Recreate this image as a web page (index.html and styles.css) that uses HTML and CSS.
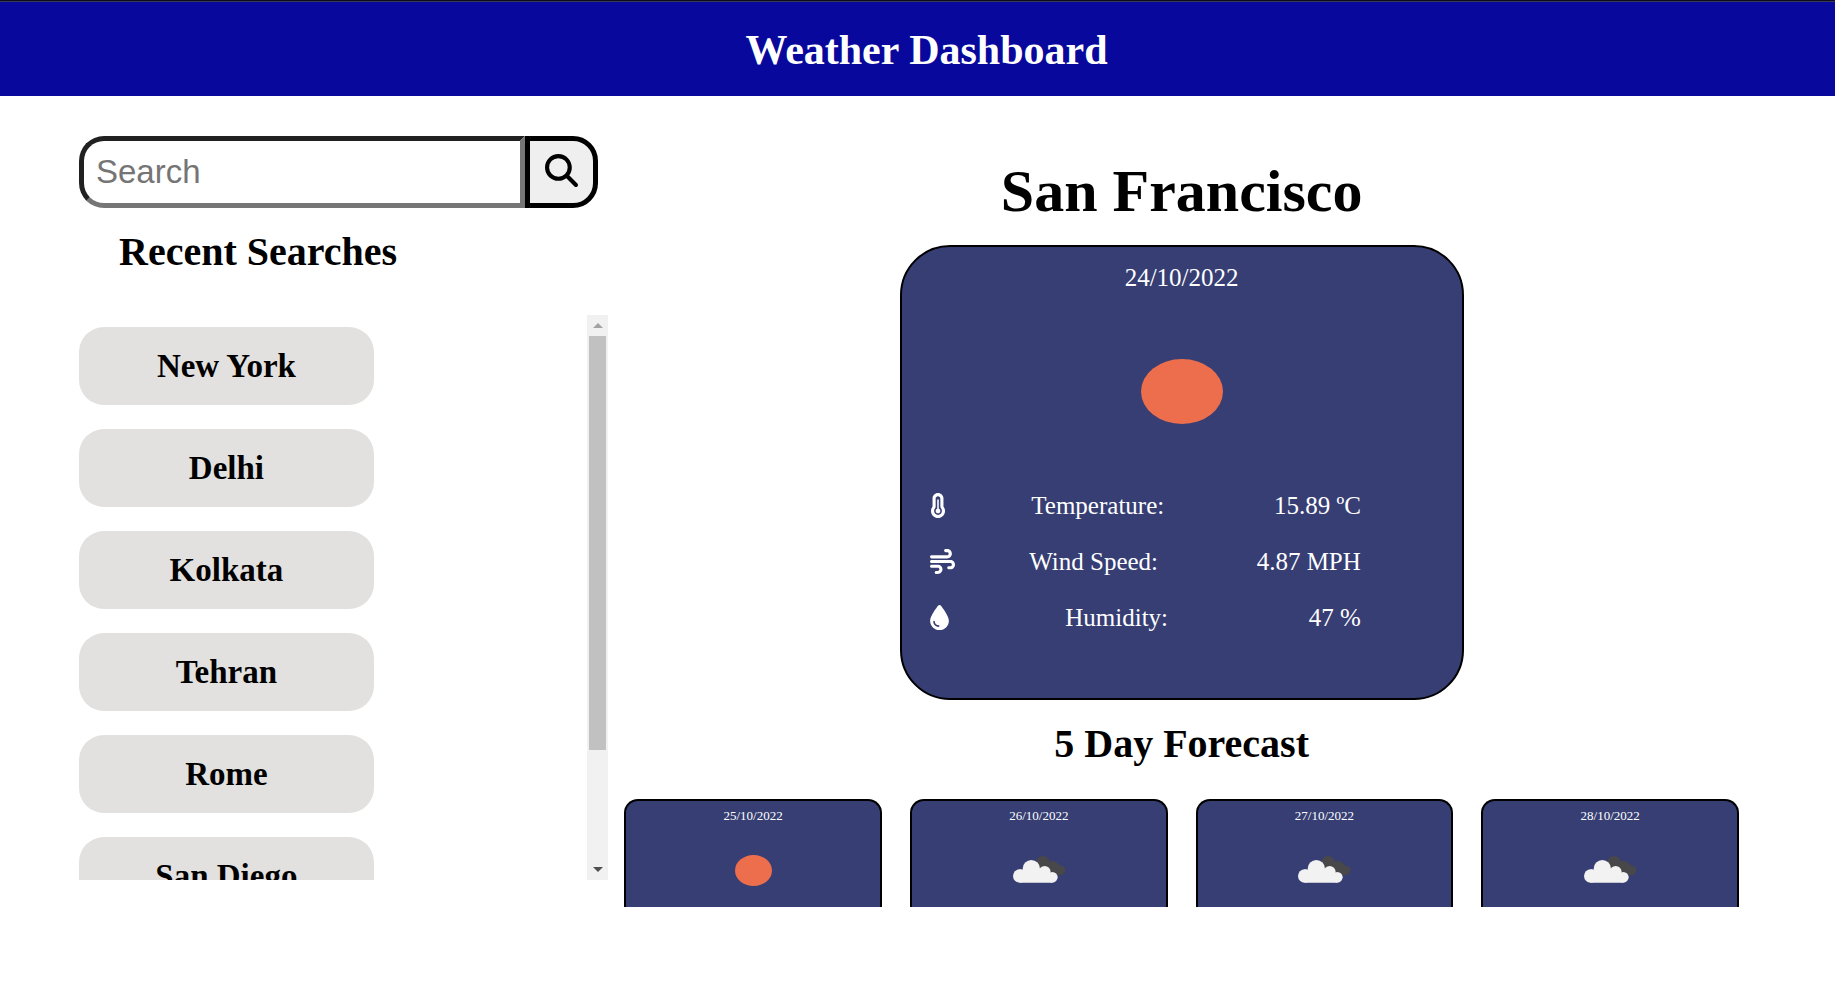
FILE: index.html
```html
<!DOCTYPE html>
<html lang="en">
<head>
<meta charset="utf-8">
<title>Weather Dashboard</title>
<meta name="viewport" content="width=device-width, initial-scale=1">
<link rel="stylesheet" href="styles.css">
</head>
<body>
<svg class="sprite" aria-hidden="true">
  <symbol id="sun" viewBox="0 0 82 65" preserveAspectRatio="none">
    <ellipse cx="41" cy="32.5" rx="41" ry="32.5" fill="#ec6e4c"/>
  </symbol>
  <symbol id="clouds" viewBox="26 33 180 120">
    <g fill="#48484a">
      <circle cx="128" cy="72" r="21"/>
      <circle cx="159" cy="83" r="17"/>
      <circle cx="181" cy="94" r="14"/>
      <path d="M118 70L160 67L187 84V106L176 109L150 104Z"/>
    </g>
    <g fill="#f2f2f2">
      <circle cx="58" cy="111" r="20"/>
      <circle cx="93" cy="89" r="26"/>
      <circle cx="133" cy="99" r="18"/>
      <circle cx="156" cy="115" r="16"/>
      <path d="M58 91L80 94L120 90L148 101L156 131H58Z"/>
    </g>
  </symbol>
</svg>

<header class="header">
  <h1 class="header-title">Weather Dashboard</h1>
</header>

<main class="layout">
  <aside class="sidebar">
    <form class="search" role="search">
      <input class="search-input" type="text" placeholder="Search" aria-label="Search">
      <button class="search-button" type="button" aria-label="Search city">
        <svg class="search-icon" viewBox="0 0 512 512"><path d="M416 208c0 45.9-14.900 88.300-40 122.700L502.600 457.400c12.500 12.500 12.500 32.800 0 45.300s-32.800 12.500-45.300 0L330.700 376c-34.400 25.200-76.800 40-122.700 40C93.100 416 0 322.900 0 208S93.100 0 208 0S416 93.100 416 208zM208 352a144 144 0 1 0 0-288 144 144 0 1 0 0 288z"/></svg>
      </button>
    </form>
    <h2 class="section-title recent-title">Recent Searches</h2>
    <div class="recent">
      <div class="recent-list">
        <button class="city" type="button">New York</button>
        <button class="city" type="button">Delhi</button>
        <button class="city" type="button">Kolkata</button>
        <button class="city" type="button">Tehran</button>
        <button class="city" type="button">Rome</button>
        <button class="city" type="button">San Diego</button>
      </div>
      <div class="scrollbar" aria-hidden="true">
        <span class="scroll-arrow scroll-up"></span>
        <span class="scroll-thumb"></span>
        <span class="scroll-arrow scroll-down"></span>
      </div>
    </div>
  </aside>

  <section class="weather">
    <h2 class="city-name">San Francisco</h2>
    <article class="today">
      <p class="today-date">24/10/2022</p>
      <svg class="today-icon"><use href="#sun"/></svg>
      <div class="metrics">
        <div class="metric">
          <svg class="metric-icon narrow" viewBox="0 0 320 512"><path d="M160 64c-26.500 0-48 21.500-48 48V276.500c0 17.300-7.100 31.900-15.300 42.500C86.200 332.600 80 349.500 80 368c0 44.200 35.800 80 80 80s80-35.800 80-80c0-18.500-6.200-35.400-16.700-48.900c-8.200-10.600-15.300-25.200-15.300-42.500V112c0-26.500-21.500-48-48-48zM48 112C48 50.200 98.100 0 160 0s112 50.100 112 112V276.500c0 .1 .1 .3 .2 .6c.2 .6 .8 1.600 1.700 2.800c18.900 24.400 30.100 55 30.100 88.100c0 79.500-64.500 144-144 144S16 447.500 16 368c0-33.200 11.200-63.800 30.100-88.100c.9-1.200 1.500-2.200 1.700-2.800c.1-.3 .2-.5 .2-.6V112zM208 368c0 26.500-21.500 48-48 48s-48-21.500-48-48c0-20.900 13.400-38.700 32-45.300V144c0-8.800 7.200-16 16-16s16 7.200 16 16V322.700c18.600 6.600 32 24.400 32 45.300z"/></svg>
          <span class="metric-label">Temperature:</span>
          <span>15.89 ºC</span>
        </div>
        <div class="metric">
          <svg class="metric-icon" viewBox="0 0 512 512"><path d="M288 32c0 17.700 14.300 32 32 32h32c17.700 0 32 14.300 32 32s-14.300 32-32 32H32c-17.700 0-32 14.300-32 32s14.300 32 32 32H352c53 0 96-43 96-96s-43-96-96-96H320c-17.700 0-32 14.300-32 32zm64 352c0 17.700 14.300 32 32 32h32c53 0 96-43 96-96s-43-96-96-96H32c-17.700 0-32 14.300-32 32s14.300 32 32 32H416c17.700 0 32 14.300 32 32s-14.300 32-32 32H384c-17.700 0-32 14.300-32 32zM128 512h32c53 0 96-43 96-96s-43-96-96-96H32c-17.700 0-32 14.300-32 32s14.300 32 32 32H160c17.700 0 32 14.300 32 32s-14.300 32-32 32H128c-17.700 0-32 14.300-32 32s14.300 32 32 32z"/></svg>
          <span class="metric-label">Wind Speed:</span>
          <span>4.87 MPH</span>
        </div>
        <div class="metric">
          <svg class="metric-icon drop" viewBox="0 0 384 512"><path d="M192 512C86 512 0 426 0 320C0 228.800 130.200 57.700 166.600 11.700C172.600 4.200 181.500 0 191.100 0h1.800c9.600 0 18.500 4.200 24.500 11.700C253.800 57.700 384 228.800 384 320c0 106-86 192-192 192zM96 336c0-8.800-7.200-16-16-16s-16 7.200-16 16c0 61.900 50.100 112 112 112c8.800 0 16-7.200 16-16s-7.200-16-16-16c-44.200 0-80-35.800-80-80z"/></svg>
          <span class="metric-label">Humidity:</span>
          <span>47 %</span>
        </div>
      </div>
    </article>

    <h2 class="section-title forecast-title">5 Day Forecast</h2>
    <div class="forecast">
      <article class="day"><p class="day-date">25/10/2022</p><div class="day-icon"><svg class="day-sun"><use href="#sun"/></svg></div></article>
      <article class="day"><p class="day-date">26/10/2022</p><div class="day-icon"><svg class="day-clouds"><use href="#clouds"/></svg></div></article>
      <article class="day"><p class="day-date">27/10/2022</p><div class="day-icon"><svg class="day-clouds"><use href="#clouds"/></svg></div></article>
      <article class="day"><p class="day-date">28/10/2022</p><div class="day-icon"><svg class="day-clouds"><use href="#clouds"/></svg></div></article>
    </div>
  </section>
</main>
</body>
</html>
```
FILE: styles.css
```css
* {
  box-sizing: border-box;
}

body {
  margin: 0;
  background: #fff;
  color: #000;
  font-family: "Liberation Serif", "Times New Roman", serif;
}

h1, h2, p {
  margin: 0;
}

.sprite {
  position: absolute;
  width: 0;
  height: 0;
}

.header {
  display: flex;
  justify-content: center;
  padding: 25px 0 21px 18px;
  border-top: 1px solid #0c0c1c;
  box-shadow: inset 0 1px #3a3a55;
  background: #08089c;
}

.header-title {
  color: #fff;
  font-size: 42px;
  line-height: 49px;
}

.layout {
  display: grid;
  grid-template-columns: minmax(0, 6fr) minmax(0, 13fr);
  padding: 40px 80px 0 79px;
}

.search {
  display: flex;
  height: 72px;
  margin-right: 10px;
}

.search-input {
  flex: 1;
  min-width: 0;
  padding: 0 12px;
  border: 5px solid;
  border-color: #212121 #767676 #767676 #212121;
  border-radius: 25px 0 0 25px;
  background: #fff;
  font-family: "Liberation Sans", Arial, sans-serif;
  font-size: 33px;
}

.search-input::placeholder {
  color: #757575;
}

.search-button {
  display: flex;
  align-items: center;
  justify-content: center;
  width: 73px;
  padding: 0 0 4px;
  border: 5px solid #000;
  border-radius: 0 25px 25px 0;
  background: #efefef;
}

.search-icon {
  width: 33px;
  height: 33px;
}

.section-title {
  font-size: 40px;
  line-height: 46px;
}

.recent-title {
  margin: 21px 0 40px 40px;
}

.recent {
  display: flex;
  height: 565px;
}

.recent-list {
  flex: 1;
  display: flex;
  flex-direction: column;
  gap: 24px;
  padding-top: 12px;
  overflow: hidden;
}

.city {
  flex: none;
  width: 58%;
  height: 78px;
  padding: 0;
  border: 0;
  border-radius: 25px;
  background: #e2e1df;
  color: #000;
  font-family: inherit;
  font-size: 33px;
  font-weight: bold;
}

.scrollbar {
  display: flex;
  flex-direction: column;
  width: 21px;
  background: #f1f1f1;
}

.scroll-arrow {
  display: flex;
  align-items: center;
  justify-content: center;
  height: 21px;
}

.scroll-arrow::before {
  content: "";
  border: 5px solid transparent;
}

.scroll-up::before {
  border-top: 0;
  border-bottom-color: #a3a3a3;
}

.scroll-down {
  margin-top: auto;
}

.scroll-down::before {
  border-bottom: 0;
  border-top-color: #505050;
}

.scroll-thumb {
  height: 414px;
  margin: 0 2px;
  background: #c1c1c1;
}

.weather {
  display: flex;
  flex-direction: column;
  align-items: center;
  padding: 21px 16px 0;
}

.city-name {
  font-size: 60px;
  line-height: 69px;
}

.today {
  display: flex;
  flex-direction: column;
  align-items: center;
  width: 564px;
  max-width: 100%;
  margin-top: 19px;
  padding: 16px 0 66px;
  border: 2px solid #000;
  border-radius: 50px;
  background: #363e73;
  color: #fff;
  font-size: 25px;
  line-height: 29px;
}

.today-icon {
  width: 82px;
  height: 65px;
  margin: 67px 0;
}

.metrics {
  display: flex;
  flex-direction: column;
  gap: 27px;
  width: 100%;
  padding: 0 18% 0 5%;
}

.metric {
  display: flex;
  align-items: center;
  justify-content: space-between;
}

.metric-icon {
  width: 25px;
  height: 25px;
  fill: #fff;
}

.metric-icon.narrow {
  width: 16px;
}

.metric-icon.drop {
  width: 19px;
}

.metric-label {
  padding-right: 24px;
}

.forecast-title {
  margin: 21px 0 32px;
}

.forecast {
  display: grid;
  grid-template-columns: repeat(4, 1fr);
  gap: 28px;
  width: 100%;
}

.day {
  padding: 7px 0 17px;
  border: 2px solid #000;
  border-bottom: 0;
  border-radius: 14px 14px 0 0;
  background: #363e73;
  color: #fff;
  text-align: center;
}

.day-date {
  font-size: 13px;
  line-height: 15px;
}

.day-icon {
  display: flex;
  align-items: center;
  justify-content: center;
  height: 40px;
  margin-top: 27px;
}

.day-sun {
  width: 37px;
  height: 31px;
}

.day-clouds {
  width: 60px;
  height: 40px;
}
```
